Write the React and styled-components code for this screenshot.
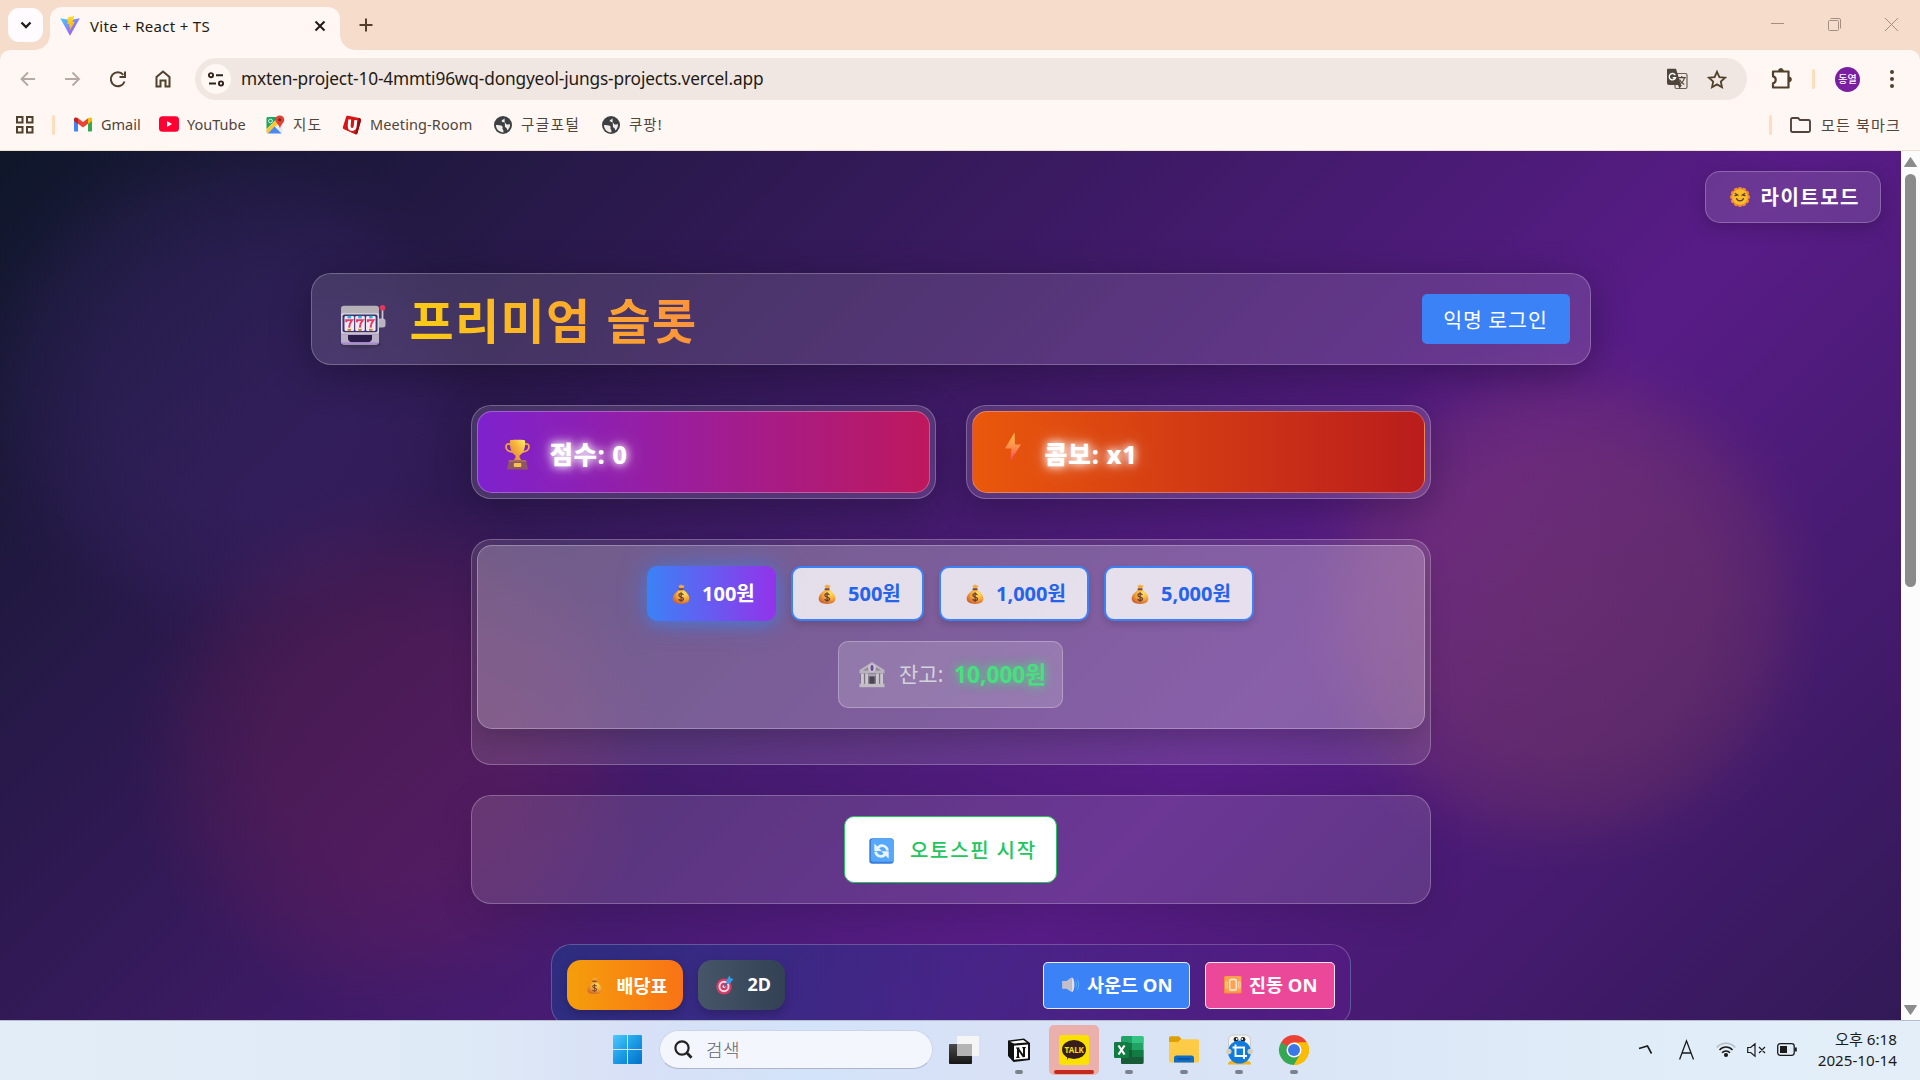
import React from 'react';
import styled, { createGlobalStyle } from 'styled-components';

const FONT = '"Noto Sans", "Noto Sans CJK KR", sans-serif';
const FONT_KR = '"Noto Sans CJK KR", "Noto Sans", sans-serif';

const Global = createGlobalStyle`
  * { box-sizing: border-box; }
  html, body { margin: 0; padding: 0; }
  body { width: 1920px; height: 1080px; overflow: hidden; font-family: ${FONT}; }
`;

const Screen = styled.div`
  width: 1920px;
  height: 1080px;
  display: flex;
  flex-direction: column;
  overflow: hidden;
`;

const Svg = styled.svg`
  display: block;
  flex: none;
  overflow: visible;
  margin-top: ${(p) => p.$mt || 0}px;
  margin-left: ${(p) => p.$ml || 0}px;
`;

const Text = styled.span`
  display: block;
  flex: none;
  white-space: nowrap;
  width: ${(p) => (p.$w ? `${p.$w}px` : 'auto')};
  margin-left: ${(p) => p.$ml || 0}px;
  font-size: ${(p) => p.$size || 16}px;
  font-weight: ${(p) => p.$weight || 400};
  letter-spacing: ${(p) => p.$ls || 0}px;
  line-height: 1.2;
  color: ${(p) => p.$color || 'inherit'};
  font-family: ${(p) => (p.$kr ? FONT_KR : FONT)};
`;

/* ---------- browser chrome ---------- */

const TabStrip = styled.div`
  height: 50px;
  flex: none;
  background: #f5dccb;
  display: flex;
  align-items: flex-end;
  padding-left: 8px;
`;

const TabSearch = styled.div`
  width: 35px;
  height: 34px;
  margin-bottom: 8px;
  border-radius: 11px;
  background: #fffbff;
  display: grid;
  place-items: center;
`;

const Tab = styled.div`
  position: relative;
  width: 290px;
  height: 43px;
  margin-left: 7px;
  padding: 0 14px 6px 10px;
  border-radius: 12px 12px 0 0;
  background: #fff7f3;
  color: #241a14;
  display: flex;
  align-items: center;
  gap: 10px;
  &::before, &::after {
    content: '';
    position: absolute;
    bottom: 0;
    width: 15px;
    height: 15px;
  }
  &::before { left: -15px; background: radial-gradient(circle at 0 0, transparent 14.5px, #fff7f3 15px); }
  &::after { right: -15px; background: radial-gradient(circle at 100% 0, transparent 14.5px, #fff7f3 15px); }
`;

const NewTab = styled.div`
  flex: 1;
  height: 50px;
  padding-left: 19px;
  display: flex;
  align-items: center;
`;

const WindowControls = styled.div`
  height: 50px;
  display: flex;
  align-items: center;
  gap: 44px;
  padding: 0 22px 1px 0;
  color: #a08f84;
`;

const ToolbarBack = styled.div`
  flex: none;
  background: #f5dccb;
`;

const Toolbar = styled.div`
  height: 58px;
  background: #fff7f3;
  border-radius: 10px 10px 0 0;
  display: flex;
  align-items: center;
  padding: 0 21px 0 19px;
`;

const NavIcons = styled.div`
  display: flex;
  gap: 27px;
  width: 176px;
  flex: none;
`;

const Omnibox = styled.div`
  width: 1552px;
  height: 42px;
  flex: none;
  border-radius: 21px;
  background: #f0e7e2;
  display: flex;
  align-items: center;
  padding: 0 20px 0 6px;
  color: #241a14;
`;

const SiteInfo = styled.div`
  width: 30px;
  height: 30px;
  border-radius: 50%;
  background: #fff7f3;
  display: grid;
  place-items: center;
  margin-right: 10px;
`;

const Fill = styled.div`
  flex: 1;
`;

const OmniIcons = styled.div`
  display: flex;
  align-items: center;
  gap: 19px;
`;

const ToolbarEnd = styled.div`
  display: flex;
  align-items: center;
  gap: 20px;
  padding-left: 23px;
`;

const Bar = styled.div`
  width: 3px;
  height: 20px;
  margin-left: ${(p) => p.$ml || 0}px;
  border-radius: 2px;
  background: #ffdcbc;
`;

const Avatar = styled.div`
  width: 25px;
  height: 25px;
  margin-right: 5px;
  border-radius: 50%;
  background: #7b1fa2;
  color: #fff;
  display: grid;
  place-items: center;
`;

const Bookmarks = styled.div`
  height: 43px;
  flex: none;
  background: #fff7f3;
  border-bottom: 1px solid #efe0cf;
  display: flex;
  align-items: center;
  padding: 0 19px 9px 16px;
  color: #51443b;
`;

const BookmarkList = styled.div`
  display: flex;
  align-items: center;
  gap: 21px;
  margin-left: 18px;
`;

const Bookmark = styled.div`
  display: flex;
  align-items: center;
  gap: ${(p) => p.$gap || 8}px;
`;

/* ---------- page ---------- */

const PageRow = styled.div`
  height: 869px;
  flex: none;
  display: flex;
`;

const Page = styled.main`
  width: 1901px;
  height: 869px;
  overflow: hidden;
  display: flex;
  flex-direction: column;
  align-items: center;
  background:
    radial-gradient(circle at 1562px 455px, rgba(215, 130, 55, 0.17) 0, rgba(205, 115, 65, 0.165) 150px, rgba(190, 100, 70, 0.12) 205px, rgba(180, 95, 70, 0.04) 240px, transparent 270px),
    radial-gradient(circle at 392px 602px, rgba(190, 35, 75, 0.17) 0, rgba(190, 35, 75, 0.16) 120px, rgba(190, 35, 80, 0.1) 190px, rgba(190, 35, 80, 0.03) 235px, transparent 265px),
    radial-gradient(circle at 225px 235px, rgba(110, 60, 190, 0.16) 0, rgba(110, 60, 190, 0.15) 120px, rgba(110, 60, 190, 0.09) 190px, rgba(110, 60, 190, 0.02) 235px, transparent 265px),
    linear-gradient(135deg, #0f172a 0%, #581c87 50%, #0f172a 100%) 0 0 / 1901px 1735px no-repeat;
`;

const TopRow = styled.div`
  align-self: stretch;
  flex: none;
  display: flex;
  justify-content: flex-end;
  padding: 20px 20.5px 0 0;
`;

const glass = `
  flex: none;
  background: rgba(255, 255, 255, 0.12);
  border: 1px solid rgba(255, 255, 255, 0.24);
`;

const ThemeButton = styled.button`
  ${glass}
  width: 176px;
  height: 52px;
  border-radius: 15px;
  box-shadow: 0 5px 18px rgba(0, 0, 0, 0.2);
  display: flex;
  align-items: center;
  gap: 11px;
  padding: 0 0 0 24px;
  color: #fff;
`;

const Header = styled.header`
  ${glass}
  width: 1280px;
  height: 92px;
  margin-top: 50px;
  border-radius: 20px;
  box-shadow: 0 10px 40px rgba(0, 0, 0, 0.3);
  display: flex;
  align-items: center;
  padding: 0 20px 0 29px;
`;

const Title = styled.h1`
  margin: -2px auto 0 24px;
  font-family: ${FONT_KR};
  font-size: 48px;
  line-height: 70px;
  font-weight: 700;
  letter-spacing: 1.3px;
  word-spacing: 3px;
  white-space: nowrap;
  color: transparent;
  background: linear-gradient(90deg, #facc15, #fb923c);
  -webkit-background-clip: text;
  background-clip: text;
`;

const LoginButton = styled.button`
  width: 148px;
  height: 50px;
  border: 0;
  border-radius: 5px;
  background: #3b82f6;
  color: #fff;
  padding: 0;
  display: grid;
  place-items: center;
`;

const Stats = styled.section`
  width: 960px;
  flex: none;
  margin-top: 40px;
  display: grid;
  grid-template-columns: 1fr 1fr;
  gap: 30px;
`;

const StatFrame = styled.div`
  ${glass}
  height: 94px;
  padding: 5px;
  border-radius: 20px;
  box-shadow: 0 10px 36px rgba(0, 0, 0, 0.22);
`;

const StatInner = styled.div`
  height: 82px;
  border-radius: 15px;
  border: 1px solid rgba(255, 255, 255, 0.28);
  background: linear-gradient(90deg, ${(p) => p.$from}, ${(p) => p.$to});
  display: flex;
  align-items: center;
  gap: 20px;
  padding: 4px 0 0 27px;
  color: #fff;
  text-shadow: 0 0 8px rgba(255, 255, 255, 0.85), 0 0 10px rgba(255, 255, 255, 0.6), 0 0 20px rgba(255, 255, 255, 0.5);
`;

const Raised = styled.div`
  margin-top: -14px;
  padding: 0 3px 0 4px;
`;

const BetFrame = styled.section`
  ${glass}
  width: 960px;
  height: 226px;
  margin-top: 40px;
  padding: 5px;
  border-radius: 20px;
`;

const BetPanel = styled.div`
  height: 184px;
  border-radius: 15px;
  border: 1px solid rgba(255, 255, 255, 0.28);
  background: rgba(255, 255, 255, 0.2);
  box-shadow: 0 10px 26px rgba(0, 0, 0, 0.18);
  display: flex;
  flex-direction: column;
  align-items: center;
  padding-top: 20px;
  gap: 20px;
`;

const BetRow = styled.div`
  display: flex;
  gap: 15px;
`;

const BetButton = styled.button`
  width: ${(p) => p.$w}px;
  height: 55px;
  padding: 0 0 0 ${(p) => (p.$active ? 24 : 24)}px;
  border-radius: 10px;
  border: ${(p) => (p.$active ? '0' : '2px solid #3b82f6')};
  background: ${(p) => (p.$active ? 'linear-gradient(90deg, #3b82f6, #9333ea)' : 'rgba(255, 255, 255, 0.8)')};
  box-shadow: ${(p) => (p.$active ? '0 0 26px rgba(59, 130, 246, 0.6), 0 5px 12px rgba(59, 130, 246, 0.3)' : '0 4px 7px rgba(0, 0, 0, 0.14)')};
  color: ${(p) => (p.$active ? '#fff' : '#2563eb')};
  display: flex;
  align-items: center;
  gap: 11px;
`;

const Balance = styled.div`
  width: 225px;
  height: 67px;
  border-radius: 10px;
  border: 1px solid rgba(255, 255, 255, 0.27);
  background: rgba(255, 255, 255, 0.17);
  display: flex;
  align-items: center;
  padding: 1px 0 0 20px;
  color: #d1d5db;
`;

const BalanceValue = styled.span`
  margin-left: 10px;
  font-family: ${FONT};
  font-size: 22.7px;
  line-height: 1.2;
  font-weight: 700;
  white-space: nowrap;
  color: #4ade80;
  text-shadow: 0 0 10px rgba(74, 222, 128, 0.9), 0 0 14px rgba(74, 222, 128, 0.4);
`;

const AutoFrame = styled.section`
  ${glass}
  width: 960px;
  height: 109px;
  margin-top: 30px;
  border-radius: 20px;
  box-shadow: 0 10px 36px rgba(0, 0, 0, 0.12);
  display: grid;
  place-items: center;
`;

const AutoButton = styled.button`
  width: 213px;
  height: 67px;
  border-radius: 10px;
  border: 1px solid #22c55e;
  background: #fff;
  color: #22c55e;
  display: flex;
  align-items: center;
  gap: 16px;
  padding: 0 0 0 24px;
`;

const Controls = styled.section`
  width: 800px;
  height: 82px;
  flex: none;
  margin-top: 40px;
  border-radius: 20px;
  border: 1px solid rgba(255, 255, 255, 0.22);
  background: linear-gradient(90deg, rgba(30, 58, 138, 0.6), rgba(88, 28, 135, 0.6));
  display: flex;
  align-items: center;
  padding: 0 15px;
  color: #fff;
`;

const PillButton = styled.button`
  width: ${(p) => p.$w}px;
  height: 50px;
  border: 0;
  border-radius: 14px;
  margin-right: 15px;
  padding: 0 0 0 ${(p) => p.$pl}px;
  background: linear-gradient(90deg, ${(p) => p.$from}, ${(p) => p.$to});
  box-shadow: 0 4px 8px rgba(0, 0, 0, 0.2);
  color: #fff;
  display: flex;
  align-items: center;
  gap: 14px;
`;

const ToggleButton = styled.button`
  width: ${(p) => p.$w}px;
  height: 47px;
  border-radius: 5px;
  border: 1px solid rgba(255, 255, 255, 0.87);
  margin-left: ${(p) => p.$ml || 0}px;
  padding: 0 0 0 18px;
  background: ${(p) => p.$bg};
  color: #fff;
  display: flex;
  align-items: center;
  gap: 8px;
`;

const Scrollbar = styled.div`
  width: 19px;
  height: 869px;
  background: #fcfcfc;
  display: flex;
  flex-direction: column;
  align-items: center;
  padding: 6px 0 5px;
`;

const Thumb = styled.div`
  width: 11px;
  height: 413px;
  margin: 7px 0 auto;
  border-radius: 6px;
  background: #8b8b8b;
`;

/* ---------- taskbar ---------- */

const Taskbar = styled.footer`
  flex: none;
  height: 60px;
  border-top: 1px solid #b5bccb;
  background: linear-gradient(90deg, #e2edf7 0%, #dfeaf7 24%, #d7e0f6 33%, #d3e3f9 42%, #d8e1f6 52%, #d9e4f6 66%, #e0edf8 85%, #e3eef8 100%);
  display: flex;
  align-items: center;
  padding: 0 0 2px 613px;
`;

const SearchPill = styled.div`
  width: 274px;
  height: 39px;
  margin: 0 16px 0 17px;
  border-radius: 20px;
  border: 1px solid #cdd5ea;
  border-bottom-color: #adb4cb;
  background: #f3f6fd;
  display: flex;
  align-items: center;
  gap: 13px;
  padding-left: 14px;
`;

const AppSlots = styled.div`
  display: flex;
  gap: 5px;
  margin-left: 15px;
`;

const AppSlot = styled.div`
  position: relative;
  width: 50px;
  height: 50px;
  border-radius: 5px;
  background: ${(p) => (p.$alert ? '#ebb0ab' : 'transparent')};
  display: grid;
  place-items: center;
  &::after {
    content: '';
    position: absolute;
    bottom: 1px;
    left: 50%;
    transform: translateX(-50%);
    width: ${(p) => (p.$alert ? 40 : p.$open ? 8 : 0)}px;
    height: 4px;
    border-radius: 2px;
    background: ${(p) => (p.$alert ? '#c42b1c' : '#7d818c')};
  }
`;

const Tray = styled.div`
  flex: 1;
  display: flex;
  align-items: center;
  justify-content: flex-end;
  padding-right: 23px;
  color: #1b1b1b;
`;

const TrayIcons = styled.div`
  display: flex;
  align-items: center;
  gap: 11px;
  margin: 0 20px 0 22px;
`;

const Clock = styled.div`
  width: 80px;
  display: flex;
  flex-direction: column;
  align-items: flex-end;
  gap: 2px;
`;

/* ---------- emoji drawings ---------- */

const MoneyBag = ({ s = 20, dim }) => (
  <Svg width={s} height={s} viewBox="0 0 20 20" opacity={dim ? 0.85 : 1}>
    <defs>
      <radialGradient id="bag" cx="0.68" cy="0.25" r="0.85">
        <stop offset="0" stopColor="#ffe35c" />
        <stop offset="0.5" stopColor="#f6a83a" />
        <stop offset="1" stopColor="#c85a2c" />
      </radialGradient>
    </defs>
    <path d="M7.500 1.300 9 1.500 10 .3l1.200 1.200 2.200-.2L12.400 4.300h-4z" fill="#f5a93b" />
    <path d="M8 6h4.600c3 2.100 5.700 5 5.700 8.600 0 3.600-2.500 5.300-8.200 5.300S1.700 18.200 1.700 14.600C1.700 11 5 8.100 8 6z" fill="url(#bag)" />
    <rect x="7.500" y="4.200" width="5.200" height="2" rx="1" fill="#7b4a3c" />
    <path d="M12.400 10.900c-.4-.9-1.300-1.300-2.300-1.300-1.300 0-2.200.7-2.200 1.700 0 2.400 4.600 1.100 4.600 3.500 0 1-1 1.700-2.300 1.700-1.200 0-2.200-.5-2.500-1.500M10.100 8.300v9.600" fill="none" stroke="#6a4038" strokeWidth="1.250" />
  </Svg>
);

const Sun = () => (
  <Svg width="20" height="20" viewBox="0 0 20 20">
    <g fill="#f0892f">
      {[0, 30, 60, 90, 120, 150, 180, 210, 240, 270, 300, 330].map((a) => (
        <circle key={a} cx="10" cy="2.200" r="2.300" transform={`rotate(${a} 10 10)`} />
      ))}
    </g>
    <circle cx="10" cy="10" r="7.700" fill="#f9bd2c" />
    <path d="M4.800 8.600 7.600 8 5.200 6.500M15.200 8.600 12.400 8l2.400-1.500M6.500 11.600c1.600 3 5.400 3 7 0" fill="none" stroke="#5b3a2e" strokeWidth="1.200" strokeLinecap="round" />
  </Svg>
);

const SlotMachine = () => (
  <Svg $mt={13} width="45" height="41" viewBox="0 0 45 49" preserveAspectRatio="none">
    <defs>
      <linearGradient id="slotBody" x1="0" y1="0" x2="0" y2="1">
        <stop offset="0" stopColor="#b9b5bd" />
        <stop offset="0.75" stopColor="#bdb6c4" />
        <stop offset="1" stopColor="#a583c4" />
      </linearGradient>
    </defs>
    <ellipse cx="20" cy="47" rx="21" ry="5" fill="rgba(0,0,0,.12)" />
    <path d="M38 16h3.500a3 3 0 0 1 3 3v5a3 3 0 0 1-3 3H38z" fill="#b9b4c2" />
    <path d="M41.500 4v14" stroke="#c9c4d1" strokeWidth="1.800" />
    <ellipse cx="41.500" cy="3.300" rx="2.800" ry="3.400" fill="#e2385c" />
    <rect x="0" y="1" width="38" height="12" rx="3" fill="#b5b1b7" />
    <rect x="0" y="9" width="38" height="31" rx="2" fill="url(#slotBody)" />
    <rect x="0" y="10" width="38" height="24" rx="2" fill="#d9d5df" />
    <rect x="1.500" y="11.500" width="35" height="21" rx="2" fill="#3c3470" />
    {[3.5, 14.200, 25].map((x) => (
      <g key={x}>
        <rect x={x} y="13" width="9.600" height="18" rx="1.500" fill="#efe9f6" />
        <rect x={x + 3} y="13" width="3.600" height="3" fill="#2fb0e6" />
        <rect x={x + 3} y="28.500" width="3.600" height="2.500" fill="#c98a2e" />
        <path d={`M${x + 1.800} 20.500v-2.500h5.800c-2 2.800-2.800 4.500-3 9`} fill="none" stroke="#f0355f" strokeWidth="2" />
      </g>
    ))}
    <path d="M7 36h24v4c0 3-2 4.500-4 4.500H11c-2 0-4-1.500-4-4.500z" fill="#2c1c4a" />
    <path d="M0 36h7v4c0 3 2 4.500 4 4.500h16c2 0 4-1.500 4-4.500v-4h7v8a3 3 0 0 1-3 3.500H3a3 3 0 0 1-3-3.500z" fill="#b9b0c6" />
    <path d="M1 45.500h36" stroke="#a77fd0" strokeWidth="1.500" />
  </Svg>
);

const Trophy = () => (
  <Svg width="25" height="31" viewBox="0 0 25 31">
    <defs>
      <linearGradient id="cup" x1="1" y1="0" x2="0" y2="1">
        <stop offset="0" stopColor="#fff06a" />
        <stop offset="0.45" stopColor="#f5b13c" />
        <stop offset="1" stopColor="#e07b32" />
      </linearGradient>
    </defs>
    <path d="M6 5.500C2.500 4 1 5.500 1 8c0 3 3 4.700 7.500 5.200M19 5.500C22.500 4 24 5.500 24 8c0 3-3 4.700-7.500 5.200" fill="none" stroke="#f0a83e" strokeWidth="1.700" />
    <path d="M5 1.500C5 .5 20 .5 20 1.500c.6 8-1.500 12.500-5.500 15v2l2.500 3.500H8l2.500-3.500v-2C6.500 14 4.400 9.500 5 1.500z" fill="url(#cup)" />
    <path d="M4 21h17l2 9.500H2z" fill="#8e5664" />
    <path d="M4 21h17l.4 2H3.600z" fill="#a36a62" />
    <rect x="8.800" y="24" width="7.500" height="4" rx=".8" fill="#f6c24a" />
  </Svg>
);

const Bolt = () => (
  <Svg width="18" height="30" viewBox="0 0 18 30">
    <defs>
      <linearGradient id="bolt" x1="0" y1="0" x2="0" y2="1">
        <stop offset="0" stopColor="#ffc04a" />
        <stop offset="0.5" stopColor="#ff8f4d" />
        <stop offset="1" stopColor="#f23f5b" />
      </linearGradient>
    </defs>
    <path d="M10.500.5 1 16.500h6.500L6 29.500l11-17h-6z" fill="url(#bolt)" />
  </Svg>
);

const Bank = () => (
  <Svg width="26" height="26" viewBox="0 0 26 26">
    <path d="M13 0 25.500 8v3.500H.5V8z" fill="#b9b3bd" />
    <path d="M13 2.500 22 8.500H4z" fill="#8f8896" />
    <circle cx="13" cy="6" r="4" fill="#c9c3cf" />
    <ellipse cx="13" cy="6" rx="1.500" ry="3" fill="#6b4a9a" />
    <rect x="1.500" y="11.500" width="23" height="10.500" fill="#7d7784" />
    {[2, 6.200, 17, 21.200].map((x) => (
      <rect key={x} x={x} y="11.500" width="2.900" height="10.500" fill="#cbc6cf" />
    ))}
    <rect x="9.500" y="12" width="7" height="2.500" fill="#aaa3b0" />
    <rect x="10.500" y="14.500" width="5" height="7.500" fill="#4b4454" />
    <rect x=".5" y="21.800" width="25" height="3.400" fill="#c3bdc8" />
  </Svg>
);

const Repeat = () => (
  <Svg $mt={2} width="25" height="26" viewBox="0 0 25 26">
    <rect x=".3" y=".3" width="24.400" height="25.400" rx="3" fill="#3a7ddb" />
    <rect x="2" y=".8" width="22.500" height="23" rx="2.500" fill="#55a8fa" />
    <g fill="none" stroke="#eaf4ff" strokeWidth="2.700">
      <path d="M8.500 10.500C11 6 17.500 7 18.500 12.500" />
      <path d="M16.500 15.500C14 20 7.500 19 6.500 13.800" />
    </g>
    <path d="M5.300 5.500v7.500h7.500zM19.700 20.700v-7.500h-7.500z" fill="#eaf4ff" />
  </Svg>
);

const Dart = () => (
  <Svg width="18" height="20" viewBox="0 0 18 20">
    <ellipse cx="8" cy="11.500" rx="7.700" ry="8" fill="#d83a63" />
    <ellipse cx="8" cy="11.500" rx="5.500" ry="5.800" fill="#e9dcea" />
    <ellipse cx="8" cy="11.500" rx="3.600" ry="3.800" fill="#d83a63" />
    <ellipse cx="8" cy="11.500" rx="1.500" ry="1.600" fill="#f3e4ee" />
    <path d="m8 11.500 4.500-5" stroke="#2b6fae" strokeWidth="1.300" />
    <path d="M10.500 5.300 13.500.5l1 2.500 3 1.200-3.800 4.300-3 .2z" fill="#2c9fe6" />
  </Svg>
);

const Speaker = () => (
  <Svg width="17.500" height="15.500" viewBox="0 0 20 18">
    <path d="M0 4.500h5L11 .5v17L5 13.500H0z" fill="#c3bfca" />
    <path d="M11 .5c2.200 0 3.200 4 3.200 8.500s-1 8.500-3.200 8.500z" fill="#e3dfe8" />
    <path d="M15.500 5.500c1.300 2 1.300 5 0 7M17.500 2.800c2.200 3.500 2.200 8.900 0 12.400" fill="none" stroke="#58b6f2" strokeWidth="1" />
  </Svg>
);

const Vibration = () => (
  <Svg width="17.500" height="17.500" viewBox="0 0 20 20">
    <rect x="0" y="0" width="20" height="20" rx="1.500" fill="#f58a34" />
    <rect x="1" y=".3" width="18.600" height="18.500" rx="1.500" fill="#fba352" />
    <rect x="6.500" y="4" width="7.500" height="12" rx="1.500" fill="none" stroke="#ffeedd" strokeWidth="1.600" />
    <path d="M4.300 6.500c-.9 2.300-.9 4.700 0 7M16 6.500c.9 2.300.9 4.700 0 7M2.500 5.500c-1 3-1 6 0 9M17.800 5.500c1 3 1 6 0 9" fill="none" stroke="#ffe3c4" strokeWidth=".9" />
  </Svg>
);

/* ---------- logos ---------- */

const Vite = () => (
  <Svg width="20" height="20" viewBox="0 0 20 20">
    <defs>
      <linearGradient id="v1" x1="0" y1="0" x2="1" y2="1">
        <stop offset="0" stopColor="#41d1ff" />
        <stop offset="1" stopColor="#bd34fe" />
      </linearGradient>
      <linearGradient id="v2" x1="0" y1="0" x2="0" y2="1">
        <stop offset="0" stopColor="#ffdd35" />
        <stop offset="1" stopColor="#ffa800" />
      </linearGradient>
    </defs>
    <path d="M.2 2.200 10 19.700 19.800 2.200 10.300 4z" fill="url(#v1)" />
    <path d="M14.300 0 7.800 1.200l-.4 7 2-.4-.6 3.300 1.500-.4-1 4.800 5.500-9.800-2.300.4z" fill="url(#v2)" />
  </Svg>
);

const Gmail = () => (
  <Svg width="20" height="16" viewBox="0 0 20 16">
    <path d="M1 3v11.500c0 .6.400 1 1 1h3V6z" fill="#4285f4" />
    <path d="M19 3v11.500c0 .6-.4 1-1 1h-3V6z" fill="#34a853" />
    <path d="M5 2.200v5.600l5 3.800 5-3.800V2.200L10 6z" fill="#ea4335" />
    <path d="M1 3v2l4 3V2.200C3.500 1 1 1 1 3z" fill="#c5221f" />
    <path d="M19 3v2l-4 3V2.200C16.500 1 19 1 19 3z" fill="#fbbc04" />
  </Svg>
);

const YouTube = () => (
  <Svg width="20" height="16" viewBox="0 0 20 16">
    <rect width="20" height="15.500" y=".2" rx="3.500" fill="#ff0033" />
    <path d="M8 5v6l5-3z" fill="#fff" />
  </Svg>
);

const Maps = () => (
  <Svg width="20" height="20" viewBox="0 0 20 20">
    <rect x="1.500" y="2" width="16" height="16.500" rx="1.500" fill="#e8eaed" />
    <path d="M1.500 3.500c0-1 .5-1.500 1.500-1.500h11L1.500 14z" fill="#1fa463" />
    <path d="M1.500 14 12 4l3 3L3 18.500c-1 0-1.500-.5-1.500-1.500z" fill="#f9c933" />
    <path d="m9.500 11.500 7 7H3z" fill="#4a89f3" />
    <circle cx="5.500" cy="6" r="1.900" fill="none" stroke="#d9f2e4" strokeWidth="1" />
    <path d="M14.800.5c2.700 0 4.500 2 4.500 4.300 0 2.900-3.200 4-4.300 8.700-1.300-4.700-4.600-5.800-4.600-8.700 0-2.300 1.700-4.300 4.400-4.300z" fill="#e34133" />
    <circle cx="14.800" cy="4.800" r="1.500" fill="#7c231b" />
  </Svg>
);

const MeetingLogo = () => (
  <Svg width="20" height="20" viewBox="0 0 20 20">
    <path d="M6 .8 17 3c1.300.3 2 1 2 2.500L15.500 18c-.3 1.200-1 1.600-2.200 1.200L2.500 14.500C1 14 .5 13 1 11.700L4 2.200C4.300 1.100 5 .6 6 .8z" fill="#d81414" />
    <path d="M17 3c1.300.3 2 1 2 2.500L15.500 18c-.3 1.200-1 1.600-2.200 1.200z" fill="#8e0d12" />
    <path d="M7.700 4.500 7.200 11c0 4.500 5.500 4.800 6 .2l.6-6" fill="none" stroke="#fff" strokeWidth="2.900" />
  </Svg>
);

const Globe = () => (
  <Svg width="20" height="20" viewBox="0 0 20 20">
    <circle cx="10" cy="10" r="9" fill="#3c4043" />
    <path d="M3 10c2 0 6 .3 6.500 1.600.5 1.200-.7 1.700.3 2.700.8.700.6 2 .7 3.200-5-.3-7.700-4-7.500-7.500zM11.500 3.200c-.3 1.500-2.500 1-2.800 2.500-.2 1.300 1.300 1.300 2.700 1.500 1.500.2 1.200 2.300 2.700 2.400 1.200 0 1.800-.5 2.900-.4.200 2.500-1 5-2.800 6.400.2-1.600-.7-3-2.200-3.300" fill="#f3ece8" />
  </Svg>
);

const ExtIcon = () => (
  <Svg width="22" height="22" viewBox="0 0 22 22" fill="none" stroke="#51402b" strokeWidth="2.200">
    <path d="M3 3.500h15.500v16H3v-4.200c1.700-.3 2.700-1.700 2.700-3.500S4.700 8.600 3 8.300z" strokeLinejoin="round" />
    <path d="M8.500 3a2.400 2.400 0 0 1 4.800 0zM19 9a2.400 2.400 0 0 1 0 4.800z" fill="#51402b" strokeWidth="1" />
  </Svg>
);

const TranslateIcon = () => (
  <Svg width="22" height="22" viewBox="0 0 22 22">
    <rect x="9" y="5.500" width="12" height="15" rx="1.500" fill="none" stroke="#6b5f57" strokeWidth="1.200" />
    <path d="M2 .8h8L15 17H3c-1.300 0-2-.7-2-2V2C1 1.200 1.400.8 2 .8z" fill="#51443b" />
    <path d="M9.300 7.200A3.200 3.200 0 1 0 9.500 9.700H6.700" fill="none" stroke="#fff" strokeWidth="1.400" />
    <path d="m12 17 1.500 3.700L16 17z" fill="#51443b" />
    <path d="M11.800 9.700h8M15.700 8v1.700M18.300 10c-.5 3-2.700 5-5 6M13.500 11.500c1 2.300 2.500 3.800 4.800 5" fill="none" stroke="#51443b" strokeWidth="1.200" />
  </Svg>
);

const WinLogo = () => (
  <Svg width="29" height="29" viewBox="0 0 29 29">
    <defs>
      <linearGradient id="win" x1="0" y1="0" x2="29" y2="29" gradientUnits="userSpaceOnUse">
        <stop offset="0" stopColor="#4dcbfb" />
        <stop offset="0.5" stopColor="#1a9be4" />
        <stop offset="1" stopColor="#0470cb" />
      </linearGradient>
    </defs>
    <path d="M1 0h13v14H0V1a1 1 0 0 1 1-1zM15 0h13a1 1 0 0 1 1 1v13H15zM0 15h14v14H1a1 1 0 0 1-1-1zM15 15h14v13a1 1 0 0 1-1 1H15z" fill="url(#win)" />
  </Svg>
);

const TaskView = () => (
  <Svg width="30" height="28" viewBox="0 0 30 28">
    <defs>
      <linearGradient id="tv" x1="0" y1="0" x2="0" y2="1">
        <stop offset="0" stopColor="#4a4a4a" />
        <stop offset="1" stopColor="#161616" />
      </linearGradient>
    </defs>
    <rect x="0" y="8" width="23" height="20" rx="1" fill="url(#tv)" />
    <rect x="8" y="0" width="22" height="20" rx="1" fill="#f5f5f5" />
    <rect x="8" y="8" width="15" height="12" fill="#b4b4b4" />
  </Svg>
);

const Notion = () => (
  <Svg width="24" height="26" viewBox="0 0 24 26">
    <path d="M1 3.500 17 1.500l6 4.500v17L6.500 25 1 19z" fill="#111" />
    <path d="m3 4.700 13.200-1.700 3.600 2.500L7 6.500z" fill="#fff" />
    <path d="m7 8.700 14-1.200v14L7 22.700z" fill="#fff" />
    <path d="M11 11v9M10.600 11l6.200 9M17 10.500v9.500" fill="none" stroke="#111" strokeWidth="2" />
    <path d="M9 11h3.500M9.200 20.300h3.400M15.200 10.600h3.600" fill="none" stroke="#111" strokeWidth="1.200" />
  </Svg>
);

const TalkIcon = styled.div`
  width: 30px;
  height: 30px;
  border-radius: 3px;
  background: #fae100;
  display: grid;
  place-items: center;
`;

const Bubble = styled.div`
  position: relative;
  width: 24px;
  height: 19px;
  border-radius: 50%;
  background: #371d1e;
  color: #fae100;
  font: 700 8px/19px "Open Sans", sans-serif;
  letter-spacing: -0.2px;
  text-align: center;
  &::after {
    content: '';
    position: absolute;
    left: 5px;
    bottom: -4px;
    border: 3px solid transparent;
    border-top: 5px solid #371d1e;
    border-left: 0;
  }
`;

const Excel = () => (
  <Svg width="30" height="28" viewBox="0 0 30 28">
    <rect x="7" width="22.500" height="28" rx="1.500" fill="#21a366" />
    <path d="M18 0h10a1.500 1.500 0 0 1 1.500 1.500V7H18z" fill="#33c481" />
    <path d="M7 14h11v14H8.500A1.500 1.500 0 0 1 7 26.500z" fill="#185c37" />
    <path d="M18 14h11.500v7H18z" fill="#107c41" />
    <path d="M18 21h11.500v5.500A1.500 1.500 0 0 1 28 28H18z" fill="#185c37" />
    <path d="M7 7h11v7H7z" fill="#107c41" />
    <rect x="0" y="6" width="15" height="16" rx="1.300" fill="#107c41" />
    <path d="m4.500 9.500 6 9M10.500 9.500l-6 9" stroke="#fff" strokeWidth="2.200" />
  </Svg>
);

const FolderApp = () => (
  <Svg width="30" height="27" viewBox="0 0 30 27">
    <path d="M0 2.500C0 1 .7.300 2 .300h8l3 3.200h-1L10 6H0z" fill="#dfa006" />
    <path d="M0 6h9l3-2.700h16.500A1.500 1.500 0 0 1 30 4.800V25a1.500 1.500 0 0 1-1.500 1.500h-27A1.500 1.500 0 0 1 0 25z" fill="#fdcb45" />
    <path d="M5 26.500V22a2.500 2.500 0 0 1 2.500-2.500h15A2.500 2.500 0 0 1 25 22v4.500z" fill="#0f6cc4" />
    <path d="M8.500 23h13" stroke="#0a4a92" strokeWidth="1.200" />
  </Svg>
);

const CropApp = () => (
  <Svg width="27" height="30" viewBox="0 0 27 30">
    <rect x="2.500" y="0" width="22" height="16" rx="5" fill="#f5f4f0" stroke="#b9b6b0" strokeWidth=".6" />
    <circle cx="10" cy="4.500" r="2.400" fill="#222" />
    <circle cx="17" cy="4.500" r="2.400" fill="#222" />
    <circle cx="10.800" cy="4" r=".9" fill="#fff" />
    <circle cx="16.200" cy="4" r=".9" fill="#fff" />
    <path d="M2 29.500c0-3 3-4 6-4h11c3 0 6 1 6 4z" fill="#f2b31c" />
    <circle cx="13.500" cy="17" r="11.500" fill="#0f7bdc" />
    <circle cx="2.800" cy="16.500" r="2.700" fill="#d8cfb8" />
    <circle cx="24.200" cy="16.500" r="2.700" fill="#d8cfb8" />
    <path d="M9.500 9.500V21H21M6.500 12.500H18V24" fill="none" stroke="#fff" strokeWidth="1.900" />
  </Svg>
);

const Chrome = () => (
  <Svg width="30" height="30" viewBox="0 0 48 48">
    <path d="M24 24 3.200 12A24 24 0 0 1 44.800 12z" fill="#ea4335" />
    <path d="M24 24 44.800 12A24 24 0 0 1 24 48z" fill="#fbbc05" />
    <path d="M24 24V48A24 24 0 0 1 3.200 12z" fill="#34a853" />
    <path d="M24 12h20.800L34.400 30z" fill="#fbbc05" />
    <path d="M13.600 30 3.200 12 24 12z" fill="#ea4335" />
    <path d="M3.200 12 13.600 30 24 24z" fill="#34a853" />
    <path d="M34.400 30 24 48 20 34z" fill="#34a853" />
    <path d="M34.400 30 24 48h3A24 24 0 0 0 44.800 12H33z" fill="#fbbc05" />
    <circle cx="24" cy="24" r="12" fill="#fff" />
    <circle cx="24" cy="24" r="9.600" fill="#3b78e7" />
  </Svg>
);

const bookmarks = [
  { icon: <Gmail />, label: 'Gmail', w: 37 },
  { icon: <YouTube />, label: 'YouTube', w: 57 },
  { icon: <Maps />, label: '지도', w: 28, ls: 1.5 },
  { icon: <MeetingLogo />, label: 'Meeting-Room', w: 102, ls: 0.1 },
  { icon: <Globe />, label: '구글포털', w: 59, ls: 1.5 },
  { icon: <Globe />, label: '쿠팡!', w: 34, ls: 1 },
];

const bets = [
  { label: '100원', w: 129, active: true },
  { label: '500원', w: 133 },
  { label: '1,000원', w: 150 },
  { label: '5,000원', w: 150 },
];

export default function App() {
  return (
    <Screen>
      <Global />
      <TabStrip>
        <TabSearch>
          <Svg width="12" height="8" viewBox="0 0 12 8" fill="none" stroke="#241a14" strokeWidth="2.300"><path d="M1.500 1.500 6 6l4.500-4.500" /></Svg>
        </TabSearch>
        <Tab>
          <Vite />
          <Text $size={15} $ls={0.3}>Vite + React + TS</Text>
          <Fill />
          <Svg width="12" height="12" viewBox="0 0 12 12" stroke="#241a14" strokeWidth="2"><path d="m1.500 1.500 9 9M10.500 1.500l-9 9" /></Svg>
        </Tab>
        <NewTab>
          <Svg width="14" height="14" viewBox="0 0 14 14" stroke="#51402b" strokeWidth="2"><path d="M7 .5v13M.5 7h13" /></Svg>
        </NewTab>
        <WindowControls>
          <Svg width="13" height="13" viewBox="0 0 13 13" stroke="currentColor"><path d="M0 5.500h13" /></Svg>
          <Svg width="13" height="13" viewBox="0 0 13 13" stroke="currentColor" fill="none"><rect x=".5" y="2.500" width="10" height="10" rx="1" /><path d="M2.500.5H11a1.500 1.500 0 0 1 1.500 1.500v8.500" /></Svg>
          <Svg width="13" height="13" viewBox="0 0 13 13" stroke="currentColor"><path d="m0 0 13 13M13 0 0 13" /></Svg>
        </WindowControls>
      </TabStrip>
      <ToolbarBack>
        <Toolbar>
          <NavIcons>
            <Svg width="18" height="18" viewBox="0 0 18 18" fill="none" stroke="#b5aaa3" strokeWidth="1.900"><path d="M16 9H3M9 2.500 2.500 9 9 15.500" /></Svg>
            <Svg width="18" height="18" viewBox="0 0 18 18" fill="none" stroke="#b5aaa3" strokeWidth="1.900"><path d="M1 9h13M8.500 2.500 15 9l-6.500 6.500" /></Svg>
            <Svg width="18" height="18" viewBox="0 0 18 18" fill="none" stroke="#51402b" strokeWidth="2"><path d="M15.500 11.500A7 7 0 1 1 14.300 4.800" /><path d="M16 1.500v5.500h-5.500" /></Svg>
            <Svg width="18" height="18" viewBox="0 0 18 18" fill="none" stroke="#51402b" strokeWidth="2"><path d="M2.500 16.500V7L9 1.500 15.500 7v9.500h-4V10.500h-5v6z" /></Svg>
          </NavIcons>
          <Omnibox>
            <SiteInfo>
              <Svg width="16" height="15" viewBox="0 0 16 15" fill="none" stroke="#2f241c" strokeWidth="1.900"><circle cx="3" cy="3.200" r="2.100" /><path d="M8 3.200h7M1 11.500h7" /><circle cx="13" cy="11.500" r="2.100" /></Svg>
            </SiteInfo>
            <Text $size={17.3} $ls={-0.16}>mxten-project-10-4mmti96wq-dongyeol-jungs-projects.vercel.app</Text>
            <Fill />
            <OmniIcons>
              <TranslateIcon />
              <Svg width="20" height="19" viewBox="0 0 20 19" fill="none" stroke="#51402b" strokeWidth="1.800"><path d="m10 1.800 2.400 5.300 5.700.6-4.300 3.900 1.200 5.700-5-2.900-5 2.900 1.200-5.700L1.900 7.700l5.700-.6z" /></Svg>
            </OmniIcons>
          </Omnibox>
          <ToolbarEnd>
            <ExtIcon />
            <Bar />
            <Avatar><Text $size={10} $kr $weight={500}>동열</Text></Avatar>
            <Svg width="14" height="20" viewBox="0 0 14 20" fill="#51402b"><circle cx="7" cy="3" r="2" /><circle cx="7" cy="10" r="2" /><circle cx="7" cy="17" r="2" /></Svg>
          </ToolbarEnd>
        </Toolbar>
      </ToolbarBack>
      <Bookmarks>
        <Svg width="18" height="18" viewBox="0 0 18 18" fill="none" stroke="#51402b" strokeWidth="2"><path d="M1 1h5.500v5.500H1zM11 1h5.500v5.500H11zM1 11h5.500v5.500H1zM11 11h5.500v5.500H11z" /></Svg>
        <Bar $ml={18} />
        <BookmarkList>
          {bookmarks.map((b) => (
            <Bookmark key={b.label}>
              {b.icon}
              <Text $size={14.5} $w={b.w} $ls={b.ls}>{b.label}</Text>
            </Bookmark>
          ))}
        </BookmarkList>
        <Fill />
        <Bookmark $gap={18}>
          <Bar />
          <Bookmark $gap={10}>
            <Svg width="21" height="16" viewBox="0 0 21 16" fill="none" stroke="#51443b" strokeWidth="1.900"><path d="M1 2.500C1 1.500 1.500 1 2.500 1H8l2 2h8.500c1 0 1.500.5 1.500 1.500v9c0 1-.5 1.500-1.500 1.500h-16c-1 0-1.500-.5-1.500-1.500z" /></Svg>
            <Text $size={15} $w={80} $ls={1.2}>모든 북마크</Text>
          </Bookmark>
        </Bookmark>
      </Bookmarks>

      <PageRow>
        <Page>
          <TopRow>
            <ThemeButton>
              <Sun />
              <Text $size={20} $weight={700} $kr $ls={1.5}>라이트모드</Text>
            </ThemeButton>
          </TopRow>
          <Header>
            <SlotMachine />
            <Title>프리미엄 슬롯</Title>
            <LoginButton><Text $size={20.5} $kr $ls={0.9}>익명 로그인</Text></LoginButton>
          </Header>
          <Stats>
            <StatFrame>
              <StatInner $from="#7e22ce" $to="#be185d">
                <Trophy />
                <Text $size={25.5} $weight={800} $ls={0.5}>점수: 0</Text>
              </StatInner>
            </StatFrame>
            <StatFrame>
              <StatInner $from="#ea580c" $to="#b91c1c">
                <Raised><Bolt /></Raised>
                <Text $size={25} $weight={800} $ls={0.6}>콤보: x1</Text>
              </StatInner>
            </StatFrame>
          </Stats>
          <BetFrame>
            <BetPanel>
              <BetRow>
                {bets.map((b) => (
                  <BetButton key={b.label} $w={b.w} $active={b.active}>
                    <MoneyBag />
                    <Text $size={20} $weight={700}>{b.label}</Text>
                  </BetButton>
                ))}
              </BetRow>
              <Balance>
                <Bank />
                <Text $ml={14} $size={21} $w={45}>잔고:</Text>
                <BalanceValue>10,000원</BalanceValue>
              </Balance>
            </BetPanel>
          </BetFrame>
          <AutoFrame>
            <AutoButton>
              <Repeat />
              <Text $size={20} $weight={500} $kr $ls={1.7}>오토스핀 시작</Text>
            </AutoButton>
          </AutoFrame>
          <Controls>
            <PillButton $w={116} $pl={19} $from="#f59e0b" $to="#f97316">
              <MoneyBag s={17} dim />
              <Text $size={18.5} $weight={700} $kr>배당표</Text>
            </PillButton>
            <PillButton $w={87} $pl={18} $from="#475569" $to="#334155">
              <Dart />
              <Text $size={18} $weight={700}>2D</Text>
            </PillButton>
            <Fill />
            <ToggleButton $w={147} $bg="#3b82f6">
              <Speaker />
              <Text $size={18.5} $weight={700}>사운드 ON</Text>
            </ToggleButton>
            <ToggleButton $w={130} $ml={15} $bg="#ec4899">
              <Vibration />
              <Text $size={18.5} $weight={700}>진동 ON</Text>
            </ToggleButton>
          </Controls>
        </Page>
        <Scrollbar>
          <Svg width="13" height="10" viewBox="0 0 13 10"><path d="M6.500.5 12.500 9.500H.5z" fill="#8b8b8b" stroke="#8b8b8b" strokeLinejoin="round" /></Svg>
          <Thumb />
          <Svg width="13" height="10" viewBox="0 0 13 10"><path d="M6.500 9.500 12.500.5H.5z" fill="#8b8b8b" stroke="#8b8b8b" strokeLinejoin="round" /></Svg>
        </Scrollbar>
      </PageRow>

      <Taskbar>
        <WinLogo />
        <SearchPill>
          <Svg width="19" height="19" viewBox="0 0 19 19" fill="none" stroke="#222" strokeWidth="2.200"><circle cx="8" cy="8" r="6.600" /><path d="m13 13 4.500 4.800" strokeWidth="2.800" /></Svg>
          <Text $size={18} $color="#5f636c" $kr $weight={300} $ls={0.5}>검색</Text>
        </SearchPill>
        <TaskView />
        <AppSlots>
          <AppSlot $open><Notion /></AppSlot>
          <AppSlot $alert><TalkIcon><Bubble>TALK</Bubble></TalkIcon></AppSlot>
          <AppSlot $open><Excel /></AppSlot>
          <AppSlot $open><FolderApp /></AppSlot>
          <AppSlot $open><CropApp /></AppSlot>
          <AppSlot $open><Chrome /></AppSlot>
        </AppSlots>
        <Tray>
          <Svg width="13" height="9" viewBox="0 0 13 9" fill="none" stroke="currentColor" strokeWidth="1.600"><path d="M0 3.500 8.500 1l4 7.500" /></Svg>
          <Svg $ml={27} width="15" height="20" viewBox="0 0 15 20" fill="none" stroke="currentColor" strokeWidth="1.300"><path d="M.6 19.500 7.500.8l7 18.700M3 13h9" /></Svg>
          <TrayIcons>
            <Svg width="20" height="15" viewBox="0 0 20 15" fill="none" stroke="currentColor" strokeWidth="1.500"><path d="M.7 5.500c5-5.700 13.600-5.700 18.600 0" stroke="#b4bcc4" /><path d="M3.500 8c3.500-4 9.500-4 13 0M6 10.700c2.200-2.400 5.800-2.400 8 0" /><circle cx="10" cy="13" r="1.300" fill="currentColor" /></Svg>
            <Svg width="19" height="14" viewBox="0 0 19 14" fill="none" stroke="currentColor" strokeWidth="1.200"><path d="M.7 4.500h3L8 .8v12.400L3.700 9.500h-3zM12 4l6 6M18 4l-6 6" /></Svg>
            <Svg width="20" height="13" viewBox="0 0 20 13" fill="none" stroke="currentColor" strokeWidth="1.300"><rect x=".7" y=".7" width="16.500" height="11.600" rx="2.500" /><rect x="3" y="3" width="7" height="7" fill="currentColor" stroke="none" /><path d="M18.800 4.500v4" strokeWidth="2" /></Svg>
          </TrayIcons>
          <Clock>
            <Text $size={15.2}>오후 6:18</Text>
            <Text $size={15.2}>2025-10-14</Text>
          </Clock>
        </Tray>
      </Taskbar>
    </Screen>
  );
}
